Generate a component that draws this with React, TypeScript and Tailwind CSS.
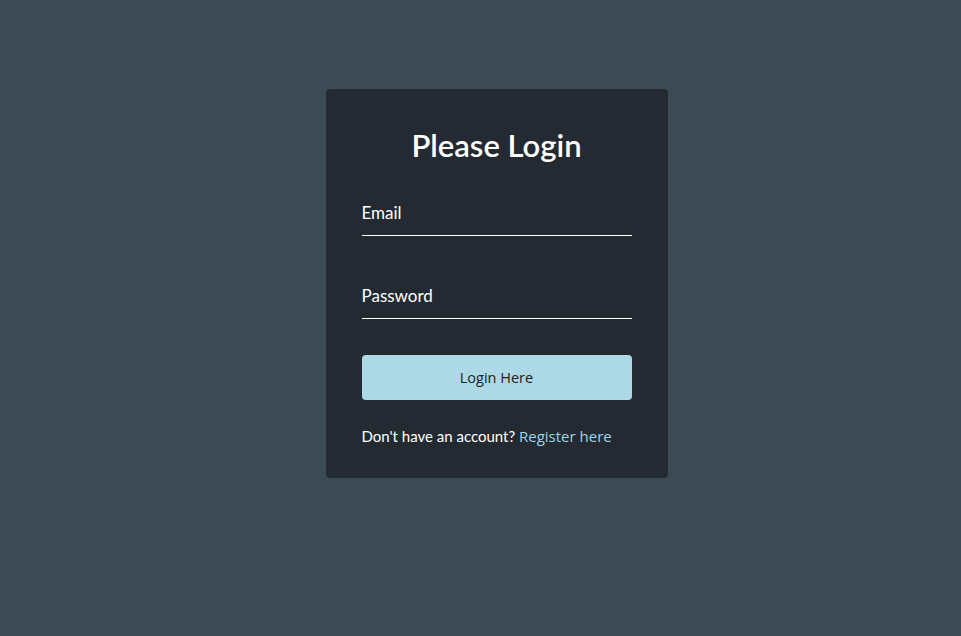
export default function App() {
  return (
    <div className="min-h-screen w-full bg-[#3c4a55] flex justify-center items-start pt-[89px] pl-[32px] font-['Lato','Noto_Sans',sans-serif]">
      <div className="w-[342px] bg-[#232a31] rounded-[4px] px-[36px] pt-[37px] pb-[32px]">
        <h1 className="text-center text-white text-[31px] leading-[38px] font-semibold">Please Login</h1>

        <form className="mt-[39px]" onSubmit={(e) => e.preventDefault()}>
          <input
            type="email"
            placeholder="Email"
            className="block w-full bg-transparent border-b border-white pb-[12px] text-[17px] leading-[20px] text-white placeholder:text-white outline-none"
          />
          <input
            type="password"
            placeholder="Password"
            className="block w-full mt-[50px] bg-transparent border-b border-white pb-[12px] text-[17px] leading-[20px] text-white placeholder:text-white outline-none"
          />
          <button
            type="submit"
            className="block w-full mt-[36px] h-[45px] rounded-[4px] bg-[#add8e6] text-[#222] text-[14.5px] font-['Open_Sans',sans-serif]"
          >
            Login Here
          </button>
        </form>

        <p className="mt-[26px] text-[15px] leading-[20px] text-white">
          Don't have an account? <a href="#" className="text-[#9dd3e8] font-['Open_Sans',sans-serif]">Register here</a>
        </p>
      </div>
    </div>
  );
}
